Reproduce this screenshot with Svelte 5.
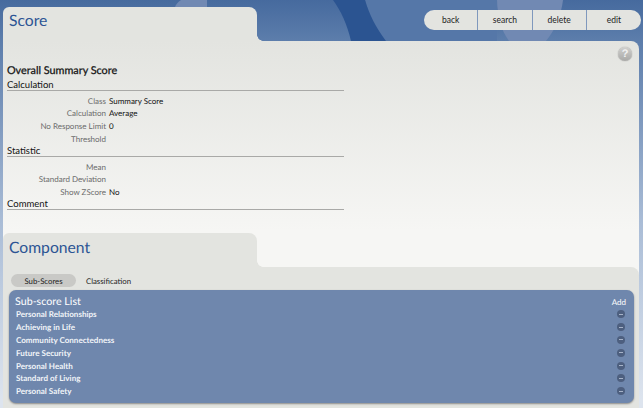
<script>
  const calculation = [
    ["Class", "Summary Score"],
    ["Calculation", "Average"],
    ["No Response Limit", "0"],
    ["Threshold", ""],
  ];
  const statistic = [
    ["Mean", ""],
    ["Standard Deviation", ""],
    ["Show ZScore", "No"],
  ];
  const subScores = [
    "Personal Relationships",
    "Achieving in Life",
    "Community Connectedness",
    "Future Security",
    "Personal Health",
    "Standard of Living",
    "Personal Safety",
  ];
</script>

{#snippet rows(items)}
  <dl class="rows">
    {#each items as [label, value]}
      <dt>{label}</dt>
      <dd>{value}</dd>
    {/each}
  </dl>
{/snippet}

<div class="page">
  <svg class="backdrop" width="643" height="408" viewBox="0 0 643 408" aria-hidden="true">
    <path d="M365 0 H497 V41 H386 C376 28 369 14 365 0Z" fill="#5577a8" />
    <path d="M333 0 H365 C369 14 376 28 386 41 H351 C347 24 341 11 333 0Z" fill="#2b5491" />
    <path d="M497 0 H563 C561 16 555 30 546 41 H509 C501 30 497 16 497 0Z" fill="#7189b3" />
    <path d="M181 0 H207 V7 H175 C176 4 178 2 181 0Z" fill="#7189b3" />
  </svg>

  <header class="top">
    <div class="tab"><h1>Score</h1></div>
    <nav class="actions">
      <button>back</button>
      <button>search</button>
      <button>delete</button>
      <button>edit</button>
    </nav>
  </header>

  <main class="panel">
    <section class="summary">
      <div class="help">?</div>
      <h2>Overall Summary Score</h2>
      <h3>Calculation</h3>
      {@render rows(calculation)}
      <h3>Statistic</h3>
      {@render rows(statistic)}
      <h3>Comment</h3>
    </section>

    <section class="component">
      <div class="tab sub"><h1>Component</h1></div>
      <div class="component-body">
        <div class="pills">
          <span class="pill active">Sub-Scores</span>
          <span class="pill">Classification</span>
        </div>
        <div class="list">
          <div class="list-head">
            <span class="list-title">Sub-score List</span>
            <span class="add">Add</span>
          </div>
          {#each subScores as name}
            <div class="list-row">
              <span>{name}</span>
              <span class="minus"></span>
            </div>
          {/each}
        </div>
      </div>
    </section>
  </main>
</div>

<style>
  :global(body) {
    margin: 0;
    font-family: Lato, sans-serif;
    text-rendering: geometricPrecision;
  }

  .page {
    position: relative;
    width: 643px;
    height: 408px;
    box-sizing: border-box;
    padding: 7px 4px 0 3px;
    overflow: hidden;
    background: linear-gradient(#466a9e 0, #5c7dab 40px, #a9bcd6 220px, #dde4ee 400px);
  }

  .backdrop {
    position: absolute;
    left: 0;
    top: 0;
  }

  .top {
    position: relative;
    display: flex;
    justify-content: space-between;
    height: 34px;
  }

  .tab {
    position: relative;
    width: 254px;
    height: 34px;
    box-sizing: border-box;
    background: #e3e4e0;
    border-radius: 6px 8px 0 0;
  }

  .tab::after {
    content: "";
    position: absolute;
    left: 100%;
    bottom: 0;
    width: 6px;
    height: 6px;
    background: radial-gradient(circle at 100% 0, transparent 5.5px, #e3e4e0 6px);
  }

  h1 {
    margin: 0;
    padding: 6px 0 0 6px;
    font-size: 15.7px;
    line-height: 17px;
    font-weight: 400;
    color: #2c5494;
  }

  .tab.sub h1 {
    padding-top: 7px;
  }

  .actions {
    display: flex;
    align-self: flex-start;
    margin: 3px -2px 0 0;
    height: 20px;
    border-radius: 10px;
    overflow: hidden;
  }

  .actions button {
    width: 54.25px;
    height: 20px;
    padding: 0;
    border: 0;
    border-right: 1px solid #7f98bd;
    background: #e3e4e0;
    font: 400 8.5px Lato, sans-serif;
    color: #222;
  }

  .actions button:last-child {
    border-right: 0;
  }

  .panel {
    position: relative;
    height: 367px;
    background: linear-gradient(#e3e4e0 0, #f6f6f4 190px);
    border-radius: 0 8px 0 0;
  }

  .summary {
    position: relative;
    height: 192px;
    box-sizing: border-box;
    padding: 22px 0 0 4px;
  }

  .help {
    position: absolute;
    right: 7px;
    top: 6px;
    width: 14px;
    height: 14px;
    border-radius: 50%;
    background: linear-gradient(#d0d0ce, #a9a9a7);
    box-shadow: 0 0 1px #777;
    color: #f2f2f2;
    font: 700 11px/14px "Liberation Sans", sans-serif;
    text-align: center;
  }

  h2 {
    margin: 0 0 2px;
    font-size: 10.8px;
    line-height: 15px;
    font-weight: 400;
    -webkit-text-stroke: 0.25px #111;
    color: #111;
  }

  h3 {
    width: 337px;
    height: 10px;
    margin: 0;
    font-size: 9.5px;
    line-height: 12px;
    font-weight: 400;
    color: #111;
    border-bottom: 1px solid #a9a9a7;
  }

  .rows {
    display: grid;
    grid-template-columns: 99px 1fr;
    column-gap: 3px;
    grid-auto-rows: 12.9px;
    margin: 3.5px 0 0;
    font-size: 8px;
    line-height: 13px;
  }

  dt {
    text-align: right;
    color: #6b6b6b;
  }

  dd {
    margin: 0;
    color: #111;
  }

  .component {
    position: relative;
  }

  .component-body {
    height: 141px;
    box-sizing: border-box;
    padding: 7px 5px 0 6px;
    background: #e3e4e0;
    border-radius: 0 8px 0 0;
  }

  .pills {
    display: flex;
    height: 16px;
    margin: 0 0 0 2px;
  }

  .pill {
    width: 65px;
    height: 13px;
    border-radius: 7px;
    font-size: 7.8px;
    line-height: 14px;
    text-align: center;
    color: #222;
  }

  .pill.active {
    background: #c9c9c6;
  }

  .list {
    box-sizing: border-box;
    height: 113px;
    padding: 5px 8px 0 6px;
    background: #6f87ad;
    border-radius: 7px;
    box-shadow: 0 1px 2px #8a8a88;
    color: #fff;
  }

  .list-head {
    display: flex;
    justify-content: space-between;
    align-items: center;
    height: 13px;
  }

  .list-title {
    font-size: 10.7px;
  }

  .add {
    font-size: 8px;
  }

  .list-row {
    display: flex;
    justify-content: space-between;
    align-items: center;
    height: 12.8px;
    padding: 0 1px;
    font-size: 8.05px;
    font-weight: 700;
    color: #f1f4f8;
  }

  .minus {
    position: relative;
    width: 8px;
    height: 8px;
    border-radius: 50%;
    background: #4d5f7f;
  }

  .minus::after {
    content: "";
    position: absolute;
    left: 2px;
    right: 2px;
    top: 3.5px;
    height: 1px;
    background: #a7b3c8;
  }
</style>
